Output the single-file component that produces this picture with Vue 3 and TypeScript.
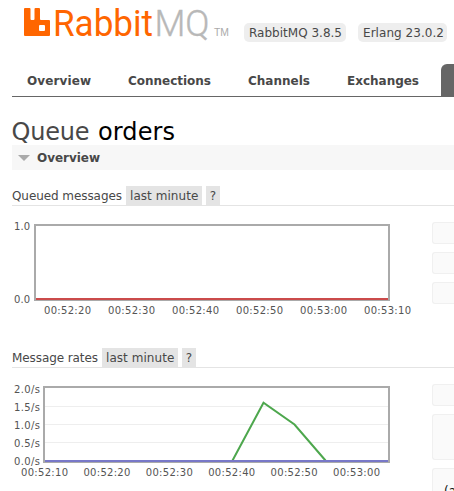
<script setup lang="ts">
interface Tick { label: string; pos: number }
const tabs = [
  { name: 'Overview', width: 101, text: 64 },
  { name: 'Connections', width: 120, text: 83 },
  { name: 'Channels', width: 99, text: 62 },
  { name: 'Exchanges', width: 109, text: 72 },
]
const versions = [
  { name: 'RabbitMQ 3.8.5', text: 93 },
  { name: 'Erlang 23.0.2', text: 81 },
]
const queuedTicks: Tick[] = ['00:52:20', '00:52:30', '00:52:40', '00:52:50', '00:53:00', '00:53:10']
  .map((label, i) => ({ label, pos: 32 + i * 64 }))
const rateTicks: Tick[] = ['00:52:10', '00:52:20', '00:52:30', '00:52:40', '00:52:50', '00:53:00']
  .map((label, i) => ({ label, pos: 9 + i * 62.4 }))
const rateLevels: Tick[] = ['2.0/s', '1.5/s', '1.0/s', '0.5/s', '0.0/s']
  .map((label, i) => ({ label, pos: 24.5 + i * 18.2 }))
</script>

<template>
  <div class="page">
    <header class="top">
      <svg class="logo" width="210" height="44" viewBox="22 0 210 44">
        <path class="mark" d="M25 8H29.5Q30.5 8 30.5 9V19Q30.5 20 31.5 20H33.5Q34.5 20 34.5 19V9Q34.5 8 35.5 8H39Q40 8 40 9V19Q40 20 41 20H49Q50 20 50 21V35Q50 36 49 36H25Q24 36 24 35V9Q24 8 25 8ZM40 25Q39 25 39 26V30Q39 31 40 31H44Q45 31 45 30V26Q45 25 44 25Z" fill-rule="evenodd" />
        <text class="word orange" x="53" y="36" textLength="100" lengthAdjust="spacingAndGlyphs">Rabbit</text>
        <text class="word grey" x="154.5" y="36" textLength="55" lengthAdjust="spacingAndGlyphs">MQ</text>
        <text class="tm" x="214" y="36" textLength="15" lengthAdjust="spacingAndGlyphs">TM</text>
      </svg>
      <ul class="versions">
        <li v-for="v in versions" :key="v.name">
          <svg :width="v.text" height="19"><text x="0" y="14" :textLength="v.text">{{ v.name }}</text></svg>
        </li>
      </ul>
    </header>

    <nav class="tabs">
      <a v-for="t in tabs" :key="t.name" :style="{ width: t.width + 'px' }">
        <svg :width="t.text" height="20"><text x="0" y="14" :textLength="t.text">{{ t.name }}</text></svg>
      </a>
      <a class="selected"></a>
    </nav>

    <main>
      <h1>
        <svg width="170" height="35" viewBox="12 0 170 35">
          <text x="11.5" y="30" textLength="78">Queue</text>
          <text class="name" x="98" y="30" textLength="77">orders</text>
        </svg>
      </h1>
      <h2><svg class="arrow" width="12" height="6"><path d="M0 0H12L6 6Z" /></svg><svg width="66" height="25"><text x="0" y="17" textLength="63">Overview</text></svg></h2>

      <section>
        <h3>
          <svg class="caption" width="110" height="19"><text x="0" y="14" textLength="110">Queued messages</text></svg>
          <span class="range">last minute</span><span class="help">?</span>
        </h3>
        <div class="panel">
          <svg class="chart" width="420" height="110" viewBox="0 0 420 110">
            <rect class="frame" x="23" y="19" width="354" height="75" />
            <path class="red" d="M24 93H376" />
            <text x="2" y="24" textLength="16">1.0</text>
            <text x="2" y="97" textLength="16">0.0</text>
            <text v-for="t in queuedTicks" :key="t.label" :x="t.pos" y="108" textLength="47">{{ t.label }}</text>
          </svg>
          <div class="side"><i class="cell"></i><i class="cell"></i><i class="cell"></i></div>
        </div>
      </section>

      <section>
        <h3>
          <svg class="caption" width="86" height="19"><text x="0" y="14" textLength="86">Message rates</text></svg>
          <span class="range">last minute</span><span class="help">?</span>
        </h3>
        <div class="panel">
          <svg class="chart" width="420" height="110" viewBox="0 0 420 110">
            <path class="grid" d="M33 38.5H376M33 56.5H376M33 74.5H376" />
            <rect class="frame" x="32" y="19" width="345" height="75" />
            <path class="green" d="M220.5 92.5L251.5 34.7L282.5 56.5L313.5 92.5" />
            <path class="blue" d="M33 93H376" />
            <text v-for="l in rateLevels" :key="l.label" x="2" :y="l.pos" textLength="26">{{ l.label }}</text>
            <text v-for="t in rateTicks" :key="t.label" :x="t.pos" y="108" textLength="47">{{ t.label }}</text>
          </svg>
          <div class="side"><i class="cell"></i><i class="cell tall"></i><div class="cell last">(ack)</div></div>
        </div>
      </section>
    </main>
  </div>
</template>

<style>
body { background: #fff; overflow: hidden; }
</style>
<style scoped>
.page { width: 454px; height: 491px; overflow: hidden; font: 12px Verdana, "DejaVu Sans", sans-serif; color: #484848; }
svg { display: block; flex: none; fill: #484848; }
.top { display: flex; height: 64px; padding-left: 22px; }
.logo .mark, .logo .orange { fill: #f60; }
.word { font: 400 37.5px Roboto, sans-serif; }
.logo .grey { fill: #b8b8b8; font-weight: 300; stroke: #b8b8b8; stroke-width: 0.4; }
.logo .tm { font: 10px "Liberation Sans", sans-serif; fill: #aaa; }
.versions { display: flex; gap: 12px; list-style: none; margin: 23px 0 0 12px; padding: 0; }
.versions li { height: 19px; padding: 0 4px 0 5px; background: #eee; border-radius: 5px; }
.versions li:last-child { padding-right: 3px; }
.tabs { display: flex; height: 32px; margin-left: 12px; border-bottom: 1px solid #666; font-weight: bold; }
.tabs a { flex: none; box-sizing: border-box; padding: 7px 0 0 15px; }
.tabs .selected { width: 80px; background: #666; border-radius: 6px 6px 0 0; }
main { padding-left: 12px; }
h1 { height: 35px; margin: 13px 0 0; font-size: 24px; font-weight: normal; }
h1 .name { fill: #000; }
h2 { display: flex; align-items: center; height: 25px; margin: 0; padding-left: 6px; background: #f7f7f7; font-size: 12px; }
h2 .arrow { margin-right: 7px; fill: #aaa; }
section { height: 162px; }
h3 { display: flex; box-sizing: border-box; height: 36px; margin: 0; padding-top: 16px; border-bottom: 1px solid #e4e4e4; font-size: 12px; font-weight: normal; line-height: 20px; }
.caption { margin-right: 4px; }
.range, .help { box-sizing: border-box; height: 19px; background: #e4e4e4; white-space: nowrap; }
.range { width: 76px; padding-left: 4px; margin-right: 4px; letter-spacing: 0.05px; }
.help { width: 14px; text-align: center; }
.panel { display: flex; }
.chart { font-size: 10px; }
.chart text { fill: #545454; }
.frame { fill: none; stroke: #aaa; stroke-width: 2; }
.grid { fill: none; stroke: #eee; }
.red, .green, .blue { fill: none; stroke-width: 2; }
.red { stroke: #cb4b4b; }
.green { stroke: #4da74d; }
.blue { stroke: #7878c8; }
.side { display: flex; flex: 1; flex-direction: column; gap: 8px; padding-top: 16px; }
.cell { box-sizing: border-box; flex: none; height: 22px; background: #fafafa; border: 1px solid #f0f0f0; border-right: 0; border-radius: 3px 0 0 3px; }
.tall { height: 46px; }
.last { height: 50px; padding: 15px 0 0 11px; color: #111; }
</style>
